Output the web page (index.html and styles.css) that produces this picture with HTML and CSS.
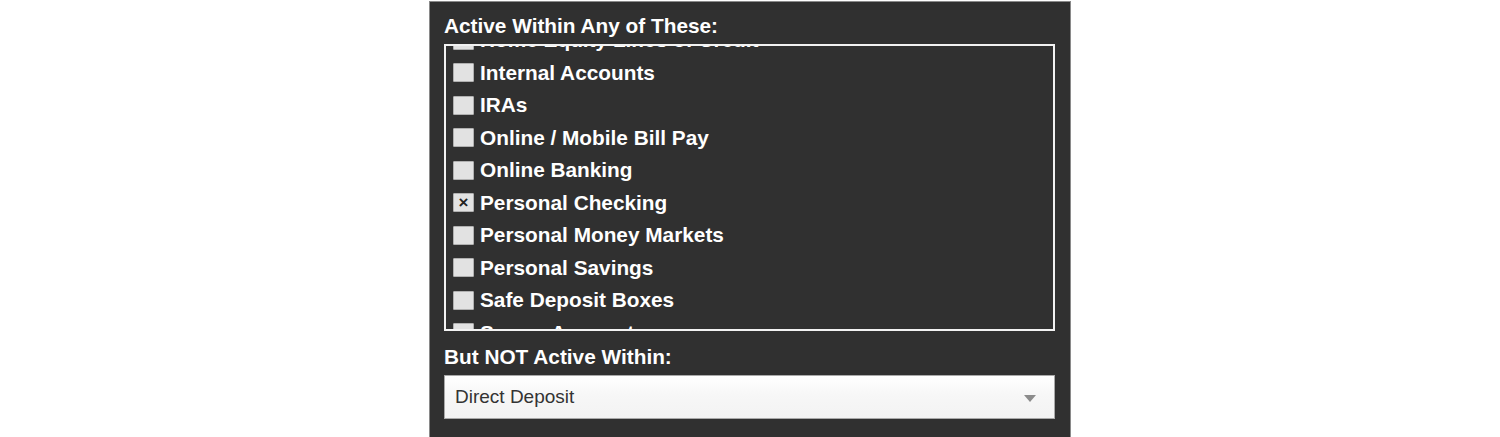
FILE: index.html
```html
<!DOCTYPE html>
<html lang="en">

<head>
    <meta charset="UTF-8">
    <meta name="viewport" content="width=device-width, initial-scale=1.0">
    <title>Account filter</title>
    <link rel="stylesheet" href="styles.css">
</head>

<body>
    <div class="panel">
        <h2 class="label">Active Within Any of These:</h2>
        <div class="listbox">
            <!-- list is scrolled part way down -->
            <ul class="options">
                <li><span class="box"></span>Home Equity Lines of Credit</li>
                <li><span class="box"></span>Internal Accounts</li>
                <li><span class="box"></span>IRAs</li>
                <li><span class="box"></span>Online / Mobile Bill Pay</li>
                <li><span class="box"></span>Online Banking</li>
                <li><span class="box checked">&#215;</span>Personal Checking</li>
                <li><span class="box"></span>Personal Money Markets</li>
                <li><span class="box"></span>Personal Savings</li>
                <li><span class="box"></span>Safe Deposit Boxes</li>
                <li><span class="box"></span>Sweep Accounts</li>
            </ul>
        </div>

        <h2 class="label second">But NOT Active Within:</h2>
        <div class="select">
            <span>Direct Deposit</span>
            <svg class="caret" width="12" height="7" viewBox="0 0 12 7">
                <polygon points="0,0 12,0 6,7" fill="#8c8c8c" />
            </svg>
        </div>
    </div>
</body></html>
```

FILE: styles.css
```css
body {
    margin: 0;
    background: #fff;
    font-family: "Liberation Sans", Arial, sans-serif;
}

.panel {
    width: 642px;
    height: 436px;
    margin: 1px auto 0;
    border: 1px solid #8a8a8a;
    border-bottom: none;
    background: #303030;
    padding: 12px 14px 18px;
    box-sizing: border-box;
}

.label {
    margin: 0 0 6px;
    color: #fff;
    font-size: 20.8px;
    line-height: 24px;
    font-weight: bold;
}

.label.second {
    margin-top: 14px;
}

.listbox {
    width: 611px;
    height: 287px;
    box-sizing: border-box;
    border: 2px solid #f2f2f2;
    overflow: hidden;
}

.options {
    list-style: none;
    margin: -22.25px 0 0;
    padding: 0 0 0 7px;
}

.options li {
    display: flex;
    align-items: center;
    gap: 6px;
    height: 32.5px;
    color: #fff;
    font-size: 20.8px;
    font-weight: bold;
    white-space: nowrap;
}

.box {
    width: 21px;
    height: 19px;
    box-sizing: border-box;
    background: #e2e2e2;
    border: 1px solid #b0b0b0;
    border-radius: 1px;
    display: flex;
    align-items: center;
    justify-content: center;
    color: #222;
    font-size: 17px;
    line-height: 1;
}

.select {
    width: 611px;
    height: 44px;
    box-sizing: border-box;
    border: 1px solid #a9a9a9;
    background: linear-gradient(#ffffff, #f7f7f7 45%, #f3f3f3);
    display: flex;
    align-items: center;
    justify-content: space-between;
    padding: 0 18px 0 10px;
    color: #333;
    font-size: 19px;
}

.caret {
    margin-top: 2px;
}
```
